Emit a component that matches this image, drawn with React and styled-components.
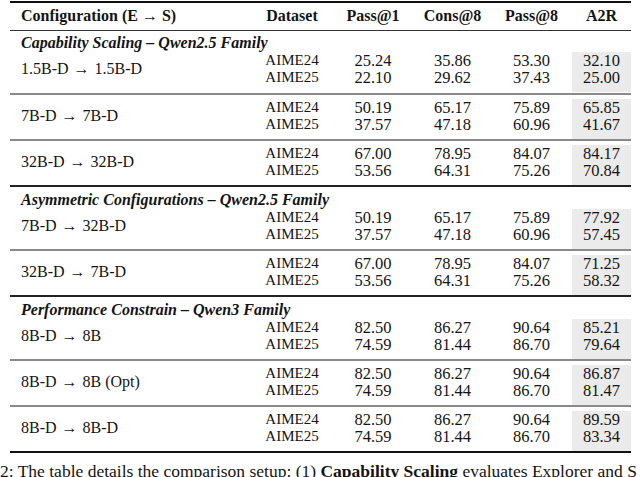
import React from 'react';
import styled, { createGlobalStyle } from 'styled-components';

const SERIF = '"Liberation Serif", "Times New Roman", Times, serif';

const GlobalStyle = createGlobalStyle`
  html, body {
    margin: 0;
    padding: 0;
    background: #fff;
    overflow: hidden;
  }
  body {
    font-family: ${SERIF};
    color: #141414;
  }
`;

const COLS = '242px 80px 82px 77px 81px 59px';

const Page = styled.div`
  width: 640px;
  height: 477px;
  padding-top: 1px;
  box-sizing: border-box;
  font-family: ${SERIF};
`;

const Table = styled.div`
  margin-left: 10px;
  width: 621px;
  border-top: 2px solid #111;
  border-bottom: 2px solid #111;
`;

const HeaderRow = styled.div`
  display: grid;
  grid-template-columns: ${COLS};
  padding: 4px 0 5px;
  border-bottom: 1px solid #333;
  font-family: ${SERIF};
  font-weight: bold;
  font-size: 16px;
  line-height: 18px;
`;

const HeadCell = styled.div`
  text-align: ${p => (p.$left ? 'left' : 'center')};
  padding-left: ${p => (p.$left ? '11px' : '0')};
  white-space: nowrap;
`;

const Group = styled.div`
  padding-top: ${p => (p.$rule ? '4px' : '3px')};
  padding-bottom: ${p => (p.$rule ? '0' : '1px')};
  border-top: ${p =>
    p.$rule === 'section' ? '2px solid #222' : p.$rule === 'group' ? '2px solid #8a8a8a' : 'none'};
`;

const Heading = styled.div`
  font-family: ${SERIF};
  font-weight: bold;
  font-style: italic;
  font-size: 16px;
  line-height: 18px;
  padding-left: 11px;
  white-space: nowrap;
`;

const DataRow = styled.div`
  display: grid;
  grid-template-columns: ${COLS};
`;

const Cell = styled.div`
  display: flex;
  flex-direction: column;
  align-items: center;
  padding-bottom: 6px;
  font-family: ${SERIF};
  font-size: ${p => (p.$num ? '16.5px' : '15px')};
  line-height: 17px;
  background: ${p => (p.$shade ? '#ebebeb' : 'transparent')};
`;

const ConfigCell = styled.div`
  padding-left: 11px;
  padding-bottom: 6px;
  font-family: ${SERIF};
  font-size: 16px;
  line-height: 34px;
  white-space: nowrap;
`;

const Arrow = styled.span`
  margin: 0 5px;
`;

const Caption = styled.div`
  margin-top: 8px;
  font-family: ${SERIF};
  font-size: 17.5px;
  line-height: 20px;
  white-space: nowrap;
  overflow: hidden;
`;

const sections = [
  {
    title: 'Capability Scaling – Qwen2.5 Family',
    groups: [
      { e: '1.5B-D', s: '1.5B-D', rows: [['25.24', '35.86', '53.30', '32.10'], ['22.10', '29.62', '37.43', '25.00']] },
      { e: '7B-D', s: '7B-D', rows: [['50.19', '65.17', '75.89', '65.85'], ['37.57', '47.18', '60.96', '41.67']] },
      { e: '32B-D', s: '32B-D', rows: [['67.00', '78.95', '84.07', '84.17'], ['53.56', '64.31', '75.26', '70.84']] },
    ],
  },
  {
    title: 'Asymmetric Configurations – Qwen2.5 Family',
    groups: [
      { e: '7B-D', s: '32B-D', rows: [['50.19', '65.17', '75.89', '77.92'], ['37.57', '47.18', '60.96', '57.45']] },
      { e: '32B-D', s: '7B-D', rows: [['67.00', '78.95', '84.07', '71.25'], ['53.56', '64.31', '75.26', '58.32']] },
    ],
  },
  {
    title: 'Performance Constrain – Qwen3 Family',
    groups: [
      { e: '8B-D', s: '8B', rows: [['82.50', '86.27', '90.64', '85.21'], ['74.59', '81.44', '86.70', '79.64']] },
      { e: '8B-D', s: '8B (Opt)', rows: [['82.50', '86.27', '90.64', '86.87'], ['74.59', '81.44', '86.70', '81.47']] },
      { e: '8B-D', s: '8B-D', rows: [['82.50', '86.27', '90.64', '89.59'], ['74.59', '81.44', '86.70', '83.34']] },
    ],
  },
];

const datasets = ['AIME24', 'AIME25'];

const ResultGroup = ({ group, title, rule }) => (
  <Group $rule={rule}>
    {title && <Heading>{title}</Heading>}
    <DataRow>
      <ConfigCell>
        {group.e}<Arrow>→</Arrow>{group.s}
      </ConfigCell>
      <Cell>
        {datasets.map(d => <span key={d}>{d}</span>)}
      </Cell>
      {[0, 1, 2, 3].map(col => (
        <Cell key={col} $num $shade={col === 3}>
          {group.rows.map((r, i) => <span key={i}>{r[col]}</span>)}
        </Cell>
      ))}
    </DataRow>
  </Group>
);

const App = () => {
  return (
    <Page>
      <GlobalStyle />
      <Table>
        <HeaderRow>
          <HeadCell $left>Configuration (E → S)</HeadCell>
          <HeadCell>Dataset</HeadCell>
          <HeadCell>Pass@1</HeadCell>
          <HeadCell>Cons@8</HeadCell>
          <HeadCell>Pass@8</HeadCell>
          <HeadCell>A2R</HeadCell>
        </HeaderRow>
        {sections.map((sec, si) =>
          sec.groups.map((g, gi) => (
            <ResultGroup
              key={`${si}-${gi}`}
              group={g}
              title={gi === 0 ? sec.title : null}
              rule={gi === 0 ? (si === 0 ? null : 'section') : 'group'}
            />
          ))
        )}
      </Table>
      <Caption>
        2: The table details the comparison setup: (1) <b>Capability Scaling</b> evaluates Explorer and S
      </Caption>
    </Page>
  );
};

export default App;
